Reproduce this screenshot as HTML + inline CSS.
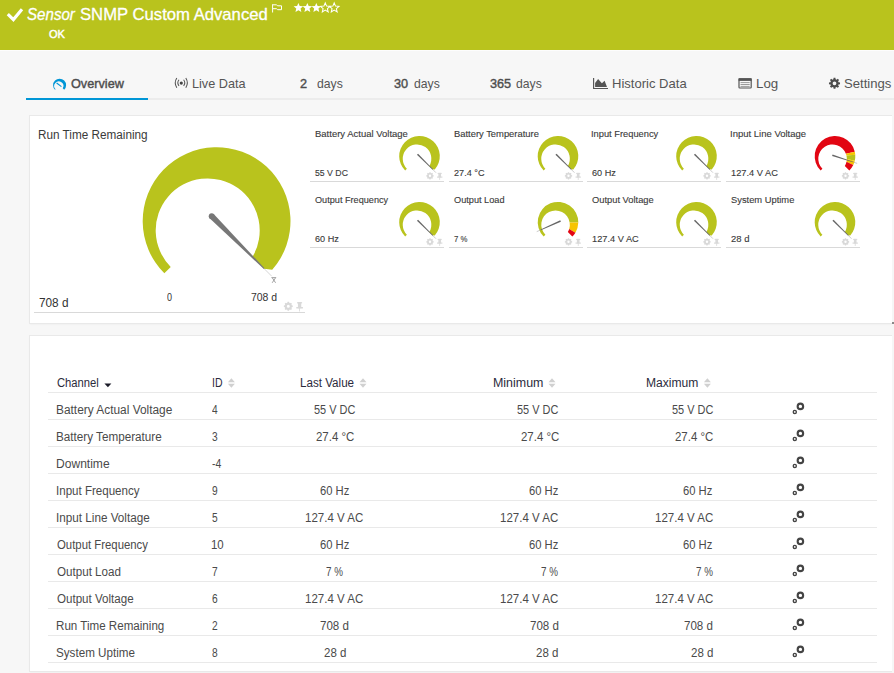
<!DOCTYPE html><html><head><meta charset="utf-8"><style>*{margin:0;padding:0;box-sizing:border-box}html,body{width:894px;height:673px;overflow:hidden;background:#f7f7f7;font-family:"Liberation Sans",sans-serif}.t{position:absolute;white-space:nowrap;line-height:1;transform-origin:0 0}.a{position:absolute}</style></head><body><div class="a" style="left:0;top:0;width:894px;height:50px;background:#b9c31d"></div><div class="a" style="left:0;top:50px;width:894px;height:1px;background:#fdfdfd"></div><div class="a" style="left:26px;top:98px;width:868px;height:2px;background:#ececec"></div><div class="a" style="left:26px;top:98px;width:122px;height:2px;background:#0096d6"></div><div class="a" style="left:30px;top:116px;width:862px;height:207px;background:#fff;box-shadow:0 0 0 1px #e9e9e9,0 1px 2px rgba(0,0,0,0.07)"></div><div class="a" style="left:34px;top:312px;width:271px;height:1px;background:#d9d9d9"></div><div class="a" style="left:310.0px;top:181px;width:134px;height:1px;background:#d9d9d9"></div><div class="a" style="left:448.5px;top:181px;width:134px;height:1px;background:#d9d9d9"></div><div class="a" style="left:587.0px;top:181px;width:134px;height:1px;background:#d9d9d9"></div><div class="a" style="left:725.5px;top:181px;width:134px;height:1px;background:#d9d9d9"></div><div class="a" style="left:310.0px;top:247px;width:134px;height:1px;background:#d9d9d9"></div><div class="a" style="left:448.5px;top:247px;width:134px;height:1px;background:#d9d9d9"></div><div class="a" style="left:587.0px;top:247px;width:134px;height:1px;background:#d9d9d9"></div><div class="a" style="left:725.5px;top:247px;width:134px;height:1px;background:#d9d9d9"></div><div class="a" style="left:30px;top:336px;width:862px;height:335px;background:#fff;box-shadow:0 0 0 1px #e9e9e9,0 1px 2px rgba(0,0,0,0.07)"></div><div class="a" style="left:48px;top:392px;width:829px;height:1px;background:#e9e9e9"></div><div class="a" style="left:48px;top:419px;width:829px;height:1px;background:#e9e9e9"></div><div class="a" style="left:48px;top:446px;width:829px;height:1px;background:#e9e9e9"></div><div class="a" style="left:48px;top:473px;width:829px;height:1px;background:#e9e9e9"></div><div class="a" style="left:48px;top:500px;width:829px;height:1px;background:#e9e9e9"></div><div class="a" style="left:48px;top:527px;width:829px;height:1px;background:#e9e9e9"></div><div class="a" style="left:48px;top:554px;width:829px;height:1px;background:#e9e9e9"></div><div class="a" style="left:48px;top:581px;width:829px;height:1px;background:#e9e9e9"></div><div class="a" style="left:48px;top:608px;width:829px;height:1px;background:#e9e9e9"></div><div class="a" style="left:48px;top:635px;width:829px;height:1px;background:#e9e9e9"></div><div class="a" style="left:48px;top:662px;width:829px;height:1px;background:#e9e9e9"></div><div class="t" style="left:27.11px;top:6.00px;font-size:17px;color:#fff;font-weight:normal;font-style:italic;transform:scaleX(0.8889);-webkit-text-stroke:0.3px #fff;">Sensor</div><div class="t" style="left:80.42px;top:6.00px;font-size:17px;color:#fff;font-weight:normal;font-style:normal;transform:scaleX(0.9805);-webkit-text-stroke:0.3px #fff;">SNMP Custom Advanced</div><div class="t" style="left:48.50px;top:29.00px;font-size:11px;color:#fff;font-weight:normal;font-style:normal;transform:scaleX(1.0071);-webkit-text-stroke:0.45px #fff;">OK</div><div class="t" style="left:71.00px;top:78.00px;font-size:12.7px;color:#4d4d4d;font-weight:normal;font-style:normal;-webkit-text-stroke:0.4px #4d4d4d;">Overview</div><div class="t" style="left:192.00px;top:78.00px;font-size:12.7px;color:#555;font-weight:normal;font-style:normal;">Live Data</div><div class="t" style="left:300.00px;top:78.00px;font-size:12.7px;color:#4d4d4d;font-weight:normal;font-style:normal;-webkit-text-stroke:0.4px #4d4d4d;">2</div><div class="t" style="left:317.00px;top:78.00px;font-size:12.7px;color:#555;font-weight:normal;font-style:normal;transform:scaleX(0.9630);">days</div><div class="t" style="left:394.00px;top:78.00px;font-size:12.7px;color:#4d4d4d;font-weight:normal;font-style:normal;-webkit-text-stroke:0.4px #4d4d4d;">30</div><div class="t" style="left:414.00px;top:78.00px;font-size:12.7px;color:#555;font-weight:normal;font-style:normal;transform:scaleX(0.9630);">days</div><div class="t" style="left:490.00px;top:78.00px;font-size:12.7px;color:#4d4d4d;font-weight:normal;font-style:normal;-webkit-text-stroke:0.4px #4d4d4d;">365</div><div class="t" style="left:515.50px;top:78.00px;font-size:12.7px;color:#555;font-weight:normal;font-style:normal;transform:scaleX(0.9630);">days</div><div class="t" style="left:611.97px;top:78.00px;font-size:12.7px;color:#555;font-weight:normal;font-style:normal;transform:scaleX(1.0278);">Historic Data</div><div class="t" style="left:755.95px;top:78.00px;font-size:12.7px;color:#555;font-weight:normal;font-style:normal;transform:scaleX(1.0500);">Log</div><div class="t" style="left:843.97px;top:78.00px;font-size:12.7px;color:#555;font-weight:normal;font-style:normal;transform:scaleX(1.0333);">Settings</div><div class="t" style="left:37.76px;top:129.40px;font-size:12.5px;color:#3a3a3a;font-weight:normal;font-style:normal;transform:scaleX(0.9391);">Run Time Remaining</div><div class="t" style="left:39.06px;top:296.80px;font-size:12.2px;color:#333;font-weight:normal;font-style:normal;transform:scaleX(0.9680);">708 d</div><div class="t" style="left:166.60px;top:292.20px;font-size:11px;color:#333;font-weight:normal;font-style:normal;transform:scaleX(0.8167);">0</div><div class="t" style="left:250.70px;top:292.20px;font-size:11px;color:#333;font-weight:normal;font-style:normal;transform:scaleX(0.9481);">708 d</div><div class="t" style="left:315.20px;top:128.80px;font-size:9.6px;color:#3a3a3a;font-weight:normal;font-style:normal;transform:scaleX(0.9894);-webkit-text-stroke:0.12px #3a3a3a;">Battery Actual Voltage</div><div class="t" style="left:315.20px;top:167.50px;font-size:9.6px;color:#3a3a3a;font-weight:normal;font-style:normal;transform:scaleX(0.9083);-webkit-text-stroke:0.12px #3a3a3a;">55 V DC</div><div class="t" style="left:453.70px;top:128.80px;font-size:9.6px;color:#3a3a3a;font-weight:normal;font-style:normal;transform:scaleX(0.9782);-webkit-text-stroke:0.12px #3a3a3a;">Battery Temperature</div><div class="t" style="left:453.70px;top:167.50px;font-size:9.6px;color:#3a3a3a;font-weight:normal;font-style:normal;transform:scaleX(0.9500);-webkit-text-stroke:0.12px #3a3a3a;">27.4 °C</div><div class="t" style="left:591.23px;top:128.80px;font-size:9.6px;color:#3a3a3a;font-weight:normal;font-style:normal;transform:scaleX(0.9696);-webkit-text-stroke:0.12px #3a3a3a;">Input Frequency</div><div class="t" style="left:592.20px;top:167.50px;font-size:9.6px;color:#3a3a3a;font-weight:normal;font-style:normal;transform:scaleX(0.9520);-webkit-text-stroke:0.12px #3a3a3a;">60 Hz</div><div class="t" style="left:729.71px;top:128.80px;font-size:9.6px;color:#3a3a3a;font-weight:normal;font-style:normal;transform:scaleX(0.9908);-webkit-text-stroke:0.12px #3a3a3a;">Input Line Voltage</div><div class="t" style="left:730.70px;top:167.50px;font-size:9.6px;color:#3a3a3a;font-weight:normal;font-style:normal;transform:scaleX(0.9667);-webkit-text-stroke:0.12px #3a3a3a;">127.4 V AC</div><div class="t" style="left:315.20px;top:194.80px;font-size:9.6px;color:#3a3a3a;font-weight:normal;font-style:normal;transform:scaleX(0.9519);-webkit-text-stroke:0.12px #3a3a3a;">Output Frequency</div><div class="t" style="left:315.20px;top:233.50px;font-size:9.6px;color:#3a3a3a;font-weight:normal;font-style:normal;transform:scaleX(0.9480);-webkit-text-stroke:0.12px #3a3a3a;">60 Hz</div><div class="t" style="left:453.70px;top:194.80px;font-size:9.6px;color:#3a3a3a;font-weight:normal;font-style:normal;transform:scaleX(0.9566);-webkit-text-stroke:0.12px #3a3a3a;">Output Load</div><div class="t" style="left:453.70px;top:233.50px;font-size:9.6px;color:#3a3a3a;font-weight:normal;font-style:normal;transform:scaleX(0.8118);-webkit-text-stroke:0.12px #3a3a3a;">7 %</div><div class="t" style="left:592.20px;top:194.80px;font-size:9.6px;color:#3a3a3a;font-weight:normal;font-style:normal;transform:scaleX(0.9719);-webkit-text-stroke:0.12px #3a3a3a;">Output Voltage</div><div class="t" style="left:592.20px;top:233.50px;font-size:9.6px;color:#3a3a3a;font-weight:normal;font-style:normal;transform:scaleX(0.9625);-webkit-text-stroke:0.12px #3a3a3a;">127.4 V AC</div><div class="t" style="left:730.70px;top:194.80px;font-size:9.6px;color:#3a3a3a;font-weight:normal;font-style:normal;transform:scaleX(0.9738);-webkit-text-stroke:0.12px #3a3a3a;">System Uptime</div><div class="t" style="left:730.70px;top:233.50px;font-size:9.6px;color:#3a3a3a;font-weight:normal;font-style:normal;transform:scaleX(0.9889);-webkit-text-stroke:0.12px #3a3a3a;">28 d</div><div class="t" style="left:57.10px;top:377.10px;font-size:12px;color:#2b2b3c;font-weight:normal;font-style:normal;transform:scaleX(0.9364);">Channel</div><div class="t" style="left:211.63px;top:377.10px;font-size:12px;color:#2b2b3c;font-weight:normal;font-style:normal;transform:scaleX(0.8727);">ID</div><div class="t" style="left:299.73px;top:377.10px;font-size:12px;color:#2b2b3c;font-weight:normal;font-style:normal;transform:scaleX(0.9691);">Last Value</div><div class="t" style="left:493.26px;top:377.10px;font-size:12px;color:#2b2b3c;font-weight:normal;font-style:normal;transform:scaleX(1.0362);">Minimum</div><div class="t" style="left:645.99px;top:377.10px;font-size:12px;color:#2b2b3c;font-weight:normal;font-style:normal;transform:scaleX(1.0078);">Maximum</div><div class="t" style="left:56.35px;top:404.10px;font-size:12.5px;color:#4a4a4a;font-weight:normal;font-style:normal;transform:scaleX(0.9512);">Battery Actual Voltage</div><div class="t" style="left:212.30px;top:404.10px;font-size:12.5px;color:#4a4a4a;font-weight:normal;font-style:normal;transform:scaleX(0.8143);">4</div><div class="t" style="left:314.00px;top:404.10px;font-size:12.5px;color:#4a4a4a;font-weight:normal;font-style:normal;transform:scaleX(0.8745);">55 V DC</div><div class="t" style="left:517.20px;top:404.10px;font-size:12.5px;color:#4a4a4a;font-weight:normal;font-style:normal;transform:scaleX(0.8745);">55 V DC</div><div class="t" style="left:671.80px;top:404.10px;font-size:12.5px;color:#4a4a4a;font-weight:normal;font-style:normal;transform:scaleX(0.8745);">55 V DC</div><div class="t" style="left:56.36px;top:431.10px;font-size:12.5px;color:#4a4a4a;font-weight:normal;font-style:normal;transform:scaleX(0.9357);">Battery Temperature</div><div class="t" style="left:212.30px;top:431.10px;font-size:12.5px;color:#4a4a4a;font-weight:normal;font-style:normal;transform:scaleX(0.8143);">3</div><div class="t" style="left:315.80px;top:431.10px;font-size:12.5px;color:#4a4a4a;font-weight:normal;font-style:normal;transform:scaleX(0.9146);">27.4 °C</div><div class="t" style="left:520.80px;top:431.10px;font-size:12.5px;color:#4a4a4a;font-weight:normal;font-style:normal;transform:scaleX(0.9146);">27.4 °C</div><div class="t" style="left:675.40px;top:431.10px;font-size:12.5px;color:#4a4a4a;font-weight:normal;font-style:normal;transform:scaleX(0.9146);">27.4 °C</div><div class="t" style="left:56.34px;top:458.10px;font-size:12.5px;color:#4a4a4a;font-weight:normal;font-style:normal;transform:scaleX(0.9648);">Downtime</div><div class="t" style="left:212.30px;top:458.10px;font-size:12.5px;color:#4a4a4a;font-weight:normal;font-style:normal;transform:scaleX(0.8364);">-4</div><div class="t" style="left:56.38px;top:485.10px;font-size:12.5px;color:#4a4a4a;font-weight:normal;font-style:normal;transform:scaleX(0.9247);">Input Frequency</div><div class="t" style="left:212.30px;top:485.10px;font-size:12.5px;color:#4a4a4a;font-weight:normal;font-style:normal;transform:scaleX(0.8143);">9</div><div class="t" style="left:319.75px;top:485.10px;font-size:12.5px;color:#4a4a4a;font-weight:normal;font-style:normal;transform:scaleX(0.8970);">60 Hz</div><div class="t" style="left:528.70px;top:485.10px;font-size:12.5px;color:#4a4a4a;font-weight:normal;font-style:normal;transform:scaleX(0.8970);">60 Hz</div><div class="t" style="left:683.30px;top:485.10px;font-size:12.5px;color:#4a4a4a;font-weight:normal;font-style:normal;transform:scaleX(0.8970);">60 Hz</div><div class="t" style="left:56.36px;top:512.10px;font-size:12.5px;color:#4a4a4a;font-weight:normal;font-style:normal;transform:scaleX(0.9364);">Input Line Voltage</div><div class="t" style="left:212.30px;top:512.10px;font-size:12.5px;color:#4a4a4a;font-weight:normal;font-style:normal;transform:scaleX(0.8143);">5</div><div class="t" style="left:305.08px;top:512.10px;font-size:12.5px;color:#4a4a4a;font-weight:normal;font-style:normal;transform:scaleX(0.9210);">127.4 V AC</div><div class="t" style="left:500.28px;top:512.10px;font-size:12.5px;color:#4a4a4a;font-weight:normal;font-style:normal;transform:scaleX(0.9210);">127.4 V AC</div><div class="t" style="left:654.88px;top:512.10px;font-size:12.5px;color:#4a4a4a;font-weight:normal;font-style:normal;transform:scaleX(0.9210);">127.4 V AC</div><div class="t" style="left:57.30px;top:539.10px;font-size:12.5px;color:#4a4a4a;font-weight:normal;font-style:normal;transform:scaleX(0.9090);">Output Frequency</div><div class="t" style="left:211.38px;top:539.10px;font-size:12.5px;color:#4a4a4a;font-weight:normal;font-style:normal;transform:scaleX(0.9154);">10</div><div class="t" style="left:319.75px;top:539.10px;font-size:12.5px;color:#4a4a4a;font-weight:normal;font-style:normal;transform:scaleX(0.8970);">60 Hz</div><div class="t" style="left:528.70px;top:539.10px;font-size:12.5px;color:#4a4a4a;font-weight:normal;font-style:normal;transform:scaleX(0.8970);">60 Hz</div><div class="t" style="left:683.30px;top:539.10px;font-size:12.5px;color:#4a4a4a;font-weight:normal;font-style:normal;transform:scaleX(0.8970);">60 Hz</div><div class="t" style="left:57.30px;top:566.10px;font-size:12.5px;color:#4a4a4a;font-weight:normal;font-style:normal;transform:scaleX(0.9294);">Output Load</div><div class="t" style="left:212.30px;top:566.10px;font-size:12.5px;color:#4a4a4a;font-weight:normal;font-style:normal;transform:scaleX(0.8143);">7</div><div class="t" style="left:325.90px;top:566.10px;font-size:12.5px;color:#4a4a4a;font-weight:normal;font-style:normal;transform:scaleX(0.7864);">7 %</div><div class="t" style="left:541.00px;top:566.10px;font-size:12.5px;color:#4a4a4a;font-weight:normal;font-style:normal;transform:scaleX(0.7864);">7 %</div><div class="t" style="left:695.60px;top:566.10px;font-size:12.5px;color:#4a4a4a;font-weight:normal;font-style:normal;transform:scaleX(0.7864);">7 %</div><div class="t" style="left:57.30px;top:593.10px;font-size:12.5px;color:#4a4a4a;font-weight:normal;font-style:normal;transform:scaleX(0.9265);">Output Voltage</div><div class="t" style="left:212.30px;top:593.10px;font-size:12.5px;color:#4a4a4a;font-weight:normal;font-style:normal;transform:scaleX(0.8143);">6</div><div class="t" style="left:305.08px;top:593.10px;font-size:12.5px;color:#4a4a4a;font-weight:normal;font-style:normal;transform:scaleX(0.9210);">127.4 V AC</div><div class="t" style="left:500.28px;top:593.10px;font-size:12.5px;color:#4a4a4a;font-weight:normal;font-style:normal;transform:scaleX(0.9210);">127.4 V AC</div><div class="t" style="left:654.88px;top:593.10px;font-size:12.5px;color:#4a4a4a;font-weight:normal;font-style:normal;transform:scaleX(0.9210);">127.4 V AC</div><div class="t" style="left:56.37px;top:620.10px;font-size:12.5px;color:#4a4a4a;font-weight:normal;font-style:normal;transform:scaleX(0.9278);">Run Time Remaining</div><div class="t" style="left:212.30px;top:620.10px;font-size:12.5px;color:#4a4a4a;font-weight:normal;font-style:normal;transform:scaleX(0.8143);">2</div><div class="t" style="left:320.20px;top:620.10px;font-size:12.5px;color:#4a4a4a;font-weight:normal;font-style:normal;transform:scaleX(0.9258);">708 d</div><div class="t" style="left:529.60px;top:620.10px;font-size:12.5px;color:#4a4a4a;font-weight:normal;font-style:normal;transform:scaleX(0.9258);">708 d</div><div class="t" style="left:684.20px;top:620.10px;font-size:12.5px;color:#4a4a4a;font-weight:normal;font-style:normal;transform:scaleX(0.9258);">708 d</div><div class="t" style="left:56.37px;top:647.10px;font-size:12.5px;color:#4a4a4a;font-weight:normal;font-style:normal;transform:scaleX(0.9321);">System Uptime</div><div class="t" style="left:212.30px;top:647.10px;font-size:12.5px;color:#4a4a4a;font-weight:normal;font-style:normal;transform:scaleX(0.8143);">8</div><div class="t" style="left:323.50px;top:647.10px;font-size:12.5px;color:#4a4a4a;font-weight:normal;font-style:normal;transform:scaleX(0.9208);">28 d</div><div class="t" style="left:536.20px;top:647.10px;font-size:12.5px;color:#4a4a4a;font-weight:normal;font-style:normal;transform:scaleX(0.9208);">28 d</div><div class="t" style="left:690.80px;top:647.10px;font-size:12.5px;color:#4a4a4a;font-weight:normal;font-style:normal;transform:scaleX(0.9208);">28 d</div><svg class="a" style="left:0;top:0" width="894" height="673" viewBox="0 0 894 673"><path d="M7.8 14.2L13.4 19.6L22 9.2" stroke="#fff" stroke-width="3.1" fill="none"/><path d="M272.6 4.2V12.5M273 4.8h3.6l0.9 1h4v3.9h-4l-0.9-1H273" stroke="#fff" stroke-width="1" fill="none"/><polygon points="298.40,2.90 299.72,6.08 303.16,6.35 300.54,8.60 301.34,11.95 298.40,10.15 295.46,11.95 296.26,8.60 293.64,6.35 297.08,6.08" fill="#fff"/><polygon points="307.35,2.90 308.67,6.08 312.11,6.35 309.49,8.60 310.29,11.95 307.35,10.15 304.41,11.95 305.21,8.60 302.59,6.35 306.03,6.08" fill="#fff"/><polygon points="316.30,2.90 317.62,6.08 321.06,6.35 318.44,8.60 319.24,11.95 316.30,10.15 313.36,11.95 314.16,8.60 311.54,6.35 314.98,6.08" fill="#fff"/><polygon points="325.25,2.90 326.57,6.08 330.01,6.35 327.39,8.60 328.19,11.95 325.25,10.15 322.31,11.95 323.11,8.60 320.49,6.35 323.93,6.08" fill="none" stroke="#fff" stroke-width="1.05"/><polygon points="334.20,2.90 335.52,6.08 338.96,6.35 336.34,8.60 337.14,11.95 334.20,10.15 331.26,11.95 332.06,8.60 329.44,6.35 332.88,6.08" fill="none" stroke="#fff" stroke-width="1.05"/><path fill="#0096d6" d="M55.00 89.80A6.50 6.50 0 1 1 64.20 89.80L62.75 88.35A4.57 4.57 0 1 0 55.57 89.23Z"/><path fill="#0096d6" d="M56.28 83.45L61.11 87.02L61.77 86.14L57.01 82.49Z"/><circle cx="181.3" cy="83.1" r="1.6" fill="#444"/><path d="M179 79.8Q176.6 82.85 179 85.9M183.6 79.8Q186 82.85 183.6 85.9M176.8 78Q173.7 82.85 176.8 87.7M185.8 78Q188.9 82.85 185.8 87.7" stroke="#555" stroke-width="1.05" fill="none"/><path d="M593.6 78V88.5H608" stroke="#555" stroke-width="1.15" fill="none"/><path d="M595.1 87V83L598.1 78.9L601.9 83.2L604.6 80.7L607 87Z" fill="#555"/><rect x="739" y="78.8" width="12.2" height="9.2" rx="0.8" fill="none" stroke="#555" stroke-width="1.2"/><rect x="738.6" y="78.3" width="13" height="2.6" fill="#555"/><path d="M740.5 82.6h9.2M740.5 84.5h9.2M740.5 86.4h9.2" stroke="#9a9a9a" stroke-width="1"/><path fill="#4d4d4d" fill-rule="evenodd" d="M838.48 82.14L840.03 82.42L840.03 84.18L838.48 84.46L838.13 85.30L839.03 86.59L837.79 87.83L836.50 86.93L835.66 87.28L835.38 88.83L833.62 88.83L833.34 87.28L832.50 86.93L831.21 87.83L829.97 86.59L830.87 85.30L830.52 84.46L828.97 84.18L828.97 82.42L830.52 82.14L830.87 81.30L829.97 80.01L831.21 78.77L832.50 79.67L833.34 79.32L833.62 77.77L835.38 77.77L835.66 79.32L836.50 79.67L837.79 78.77L839.03 80.01L838.13 81.30ZM836.40 83.30A1.90 1.90 0 1 0 832.60 83.30A1.90 1.90 0 1 0 836.40 83.30Z"/><path fill="#b9c31d" d="M164.34 273.36A73.90 73.90 0 1 1 272.20 269.78L264.15 268.65L252.43 256.93A52.00 52.00 0 1 0 170.73 266.97Z"/><path fill="#777" d="M209.60 218.20L263.80 269.01L264.51 268.30L213.70 214.10Z"/><circle cx="211.65" cy="216.15" r="2.90" fill="#777"/><line x1="264.15" y1="268.65" x2="271.68" y2="276.18" stroke="#aaa" stroke-width="0.5"/><path d="M271.4 277.6h4.8M272.4 278L275.6 282.8M275.4 278L272.2 282.8" stroke="#8a8a8a" stroke-width="0.8" fill="none"/><path fill="#d9d9d9" fill-rule="evenodd" d="M291.76 305.30L292.74 305.60L292.74 307.00L291.76 307.30L291.45 308.03L291.94 308.95L290.95 309.94L290.03 309.45L289.30 309.76L289.00 310.74L287.60 310.74L287.30 309.76L286.57 309.45L285.65 309.94L284.66 308.95L285.15 308.03L284.84 307.30L283.86 307.00L283.86 305.60L284.84 305.30L285.15 304.57L284.66 303.65L285.65 302.66L286.57 303.15L287.30 302.84L287.60 301.86L289.00 301.86L289.30 302.84L290.03 303.15L290.95 302.66L291.94 303.65L291.45 304.57ZM289.80 306.30A1.50 1.50 0 1 0 286.80 306.30A1.50 1.50 0 1 0 289.80 306.30Z"/><rect x="297.09" y="302.10" width="5.02" height="1.32" fill="#d9d9d9"/><rect x="297.95" y="302.10" width="3.30" height="6.11" fill="#d9d9d9"/><rect x="296.30" y="306.99" width="6.60" height="1.50" fill="#d9d9d9"/><rect x="299.20" y="307.74" width="0.8" height="3.76" fill="#d9d9d9"/><path fill="#b9c31d" d="M405.15 170.55A20.30 20.30 0 1 1 434.77 169.57L432.56 169.26L429.34 166.04A14.29 14.29 0 1 0 406.90 168.80Z"/><path fill="#666" d="M416.95 154.79L432.60 169.80L433.10 169.30L418.09 153.65Z"/><line x1="432.85" y1="169.55" x2="435.98" y2="172.68" stroke="#999" stroke-width="0.5"/><path fill="#d9d9d9" fill-rule="evenodd" d="M432.84 174.97L433.65 175.22L433.65 176.38L432.84 176.63L432.59 177.23L432.99 177.97L432.17 178.79L431.43 178.39L430.83 178.64L430.58 179.45L429.42 179.45L429.17 178.64L428.57 178.39L427.83 178.79L427.01 177.97L427.41 177.23L427.16 176.63L426.35 176.38L426.35 175.22L427.16 174.97L427.41 174.37L427.01 173.63L427.83 172.81L428.57 173.21L429.17 172.96L429.42 172.15L430.58 172.15L430.83 172.96L431.43 173.21L432.17 172.81L432.99 173.63L432.59 174.37ZM431.20 175.80A1.20 1.20 0 1 0 428.80 175.80A1.20 1.20 0 1 0 431.20 175.80Z"/><rect x="437.65" y="172.90" width="4.10" height="0.98" fill="#d9d9d9"/><rect x="438.35" y="172.90" width="2.70" height="4.55" fill="#d9d9d9"/><rect x="437.00" y="176.54" width="5.40" height="1.12" fill="#d9d9d9"/><rect x="439.30" y="177.10" width="0.8" height="2.80" fill="#d9d9d9"/><path fill="#b9c31d" d="M543.65 170.55A20.30 20.30 0 1 1 573.27 169.57L571.06 169.26L567.84 166.04A14.29 14.29 0 1 0 545.40 168.80Z"/><path fill="#666" d="M555.45 154.79L571.10 169.80L571.60 169.30L556.59 153.65Z"/><line x1="571.35" y1="169.55" x2="574.48" y2="172.68" stroke="#999" stroke-width="0.5"/><path fill="#d9d9d9" fill-rule="evenodd" d="M571.34 174.97L572.15 175.22L572.15 176.38L571.34 176.63L571.09 177.23L571.49 177.97L570.67 178.79L569.93 178.39L569.33 178.64L569.08 179.45L567.92 179.45L567.67 178.64L567.07 178.39L566.33 178.79L565.51 177.97L565.91 177.23L565.66 176.63L564.85 176.38L564.85 175.22L565.66 174.97L565.91 174.37L565.51 173.63L566.33 172.81L567.07 173.21L567.67 172.96L567.92 172.15L569.08 172.15L569.33 172.96L569.93 173.21L570.67 172.81L571.49 173.63L571.09 174.37ZM569.70 175.80A1.20 1.20 0 1 0 567.30 175.80A1.20 1.20 0 1 0 569.70 175.80Z"/><rect x="576.15" y="172.90" width="4.10" height="0.98" fill="#d9d9d9"/><rect x="576.85" y="172.90" width="2.70" height="4.55" fill="#d9d9d9"/><rect x="575.50" y="176.54" width="5.40" height="1.12" fill="#d9d9d9"/><rect x="577.80" y="177.10" width="0.8" height="2.80" fill="#d9d9d9"/><path fill="#b9c31d" d="M682.15 170.55A20.30 20.30 0 1 1 711.77 169.57L709.56 169.26L706.34 166.04A14.29 14.29 0 1 0 683.90 168.80Z"/><path fill="#666" d="M693.95 154.79L709.60 169.80L710.10 169.30L695.09 153.65Z"/><line x1="709.85" y1="169.55" x2="712.98" y2="172.68" stroke="#999" stroke-width="0.5"/><path fill="#d9d9d9" fill-rule="evenodd" d="M709.84 174.97L710.65 175.22L710.65 176.38L709.84 176.63L709.59 177.23L709.99 177.97L709.17 178.79L708.43 178.39L707.83 178.64L707.58 179.45L706.42 179.45L706.17 178.64L705.57 178.39L704.83 178.79L704.01 177.97L704.41 177.23L704.16 176.63L703.35 176.38L703.35 175.22L704.16 174.97L704.41 174.37L704.01 173.63L704.83 172.81L705.57 173.21L706.17 172.96L706.42 172.15L707.58 172.15L707.83 172.96L708.43 173.21L709.17 172.81L709.99 173.63L709.59 174.37ZM708.20 175.80A1.20 1.20 0 1 0 705.80 175.80A1.20 1.20 0 1 0 708.20 175.80Z"/><rect x="714.65" y="172.90" width="4.10" height="0.98" fill="#d9d9d9"/><rect x="715.35" y="172.90" width="2.70" height="4.55" fill="#d9d9d9"/><rect x="714.00" y="176.54" width="5.40" height="1.12" fill="#d9d9d9"/><rect x="716.30" y="177.10" width="0.8" height="2.80" fill="#d9d9d9"/><path fill="#e20613" d="M820.65 170.55A20.30 20.30 0 1 1 854.78 151.63L845.91 153.68A14.29 14.29 0 1 0 822.40 168.80Z"/><path fill="#f7c400" d="M854.78 151.63A20.30 20.30 0 0 1 855.25 154.78L846.44 155.40A14.29 14.29 0 0 0 845.91 153.68Z"/><path fill="#b9c31d" d="M855.25 154.78A20.30 20.30 0 0 1 854.78 160.77L846.84 158.93A14.29 14.29 0 0 0 846.44 155.40Z"/><path fill="#f7c400" d="M854.78 160.77A20.30 20.30 0 0 1 853.25 165.10L846.51 161.81A14.29 14.29 0 0 0 846.84 158.93Z"/><path fill="#e20613" d="M853.25 165.10A20.30 20.30 0 0 1 849.35 170.55L844.84 166.04A14.29 14.29 0 0 0 846.51 161.81Z"/><path fill="#666" d="M832.09 156.10L852.85 162.37L853.06 161.70L832.58 154.57Z"/><line x1="852.95" y1="162.03" x2="857.16" y2="163.40" stroke="#999" stroke-width="0.5"/><path fill="#d9d9d9" fill-rule="evenodd" d="M848.34 174.97L849.15 175.22L849.15 176.38L848.34 176.63L848.09 177.23L848.49 177.97L847.67 178.79L846.93 178.39L846.33 178.64L846.08 179.45L844.92 179.45L844.67 178.64L844.07 178.39L843.33 178.79L842.51 177.97L842.91 177.23L842.66 176.63L841.85 176.38L841.85 175.22L842.66 174.97L842.91 174.37L842.51 173.63L843.33 172.81L844.07 173.21L844.67 172.96L844.92 172.15L846.08 172.15L846.33 172.96L846.93 173.21L847.67 172.81L848.49 173.63L848.09 174.37ZM846.70 175.80A1.20 1.20 0 1 0 844.30 175.80A1.20 1.20 0 1 0 846.70 175.80Z"/><rect x="853.15" y="172.90" width="4.10" height="0.98" fill="#d9d9d9"/><rect x="853.85" y="172.90" width="2.70" height="4.55" fill="#d9d9d9"/><rect x="852.50" y="176.54" width="5.40" height="1.12" fill="#d9d9d9"/><rect x="854.80" y="177.10" width="0.8" height="2.80" fill="#d9d9d9"/><path fill="#b9c31d" d="M405.15 236.55A20.30 20.30 0 1 1 434.77 235.57L432.56 235.26L429.34 232.04A14.29 14.29 0 1 0 406.90 234.80Z"/><path fill="#666" d="M416.95 220.79L432.60 235.80L433.10 235.30L418.09 219.65Z"/><line x1="432.85" y1="235.55" x2="435.98" y2="238.68" stroke="#999" stroke-width="0.5"/><path fill="#d9d9d9" fill-rule="evenodd" d="M432.84 240.97L433.65 241.22L433.65 242.38L432.84 242.63L432.59 243.23L432.99 243.97L432.17 244.79L431.43 244.39L430.83 244.64L430.58 245.45L429.42 245.45L429.17 244.64L428.57 244.39L427.83 244.79L427.01 243.97L427.41 243.23L427.16 242.63L426.35 242.38L426.35 241.22L427.16 240.97L427.41 240.37L427.01 239.63L427.83 238.81L428.57 239.21L429.17 238.96L429.42 238.15L430.58 238.15L430.83 238.96L431.43 239.21L432.17 238.81L432.99 239.63L432.59 240.37ZM431.20 241.80A1.20 1.20 0 1 0 428.80 241.80A1.20 1.20 0 1 0 431.20 241.80Z"/><rect x="437.65" y="238.90" width="4.10" height="0.98" fill="#d9d9d9"/><rect x="438.35" y="238.90" width="2.70" height="4.55" fill="#d9d9d9"/><rect x="437.00" y="242.54" width="5.40" height="1.12" fill="#d9d9d9"/><rect x="439.30" y="243.10" width="0.8" height="2.80" fill="#d9d9d9"/><path fill="#b9c31d" d="M543.65 236.55A20.30 20.30 0 1 1 578.30 222.55L569.65 222.40A14.29 14.29 0 1 0 545.40 234.80Z"/><path fill="#f7c400" d="M578.30 222.55A20.30 20.30 0 0 1 575.40 232.66L569.21 228.94A14.29 14.29 0 0 0 569.65 222.40Z"/><path fill="#e20613" d="M575.40 232.66A20.30 20.30 0 0 1 572.35 236.55L567.84 232.04A14.29 14.29 0 0 0 569.21 228.94Z"/><path fill="#666" d="M560.23 220.33L540.61 229.56L540.90 230.20L560.88 221.79Z"/><line x1="540.75" y1="229.88" x2="536.71" y2="231.68" stroke="#999" stroke-width="0.5"/><path fill="#d9d9d9" fill-rule="evenodd" d="M571.34 240.97L572.15 241.22L572.15 242.38L571.34 242.63L571.09 243.23L571.49 243.97L570.67 244.79L569.93 244.39L569.33 244.64L569.08 245.45L567.92 245.45L567.67 244.64L567.07 244.39L566.33 244.79L565.51 243.97L565.91 243.23L565.66 242.63L564.85 242.38L564.85 241.22L565.66 240.97L565.91 240.37L565.51 239.63L566.33 238.81L567.07 239.21L567.67 238.96L567.92 238.15L569.08 238.15L569.33 238.96L569.93 239.21L570.67 238.81L571.49 239.63L571.09 240.37ZM569.70 241.80A1.20 1.20 0 1 0 567.30 241.80A1.20 1.20 0 1 0 569.70 241.80Z"/><rect x="576.15" y="238.90" width="4.10" height="0.98" fill="#d9d9d9"/><rect x="576.85" y="238.90" width="2.70" height="4.55" fill="#d9d9d9"/><rect x="575.50" y="242.54" width="5.40" height="1.12" fill="#d9d9d9"/><rect x="577.80" y="243.10" width="0.8" height="2.80" fill="#d9d9d9"/><path fill="#b9c31d" d="M682.15 236.55A20.30 20.30 0 1 1 711.77 235.57L709.56 235.26L706.34 232.04A14.29 14.29 0 1 0 683.90 234.80Z"/><path fill="#666" d="M693.95 220.79L709.60 235.80L710.10 235.30L695.09 219.65Z"/><line x1="709.85" y1="235.55" x2="712.98" y2="238.68" stroke="#999" stroke-width="0.5"/><path fill="#d9d9d9" fill-rule="evenodd" d="M709.84 240.97L710.65 241.22L710.65 242.38L709.84 242.63L709.59 243.23L709.99 243.97L709.17 244.79L708.43 244.39L707.83 244.64L707.58 245.45L706.42 245.45L706.17 244.64L705.57 244.39L704.83 244.79L704.01 243.97L704.41 243.23L704.16 242.63L703.35 242.38L703.35 241.22L704.16 240.97L704.41 240.37L704.01 239.63L704.83 238.81L705.57 239.21L706.17 238.96L706.42 238.15L707.58 238.15L707.83 238.96L708.43 239.21L709.17 238.81L709.99 239.63L709.59 240.37ZM708.20 241.80A1.20 1.20 0 1 0 705.80 241.80A1.20 1.20 0 1 0 708.20 241.80Z"/><rect x="714.65" y="238.90" width="4.10" height="0.98" fill="#d9d9d9"/><rect x="715.35" y="238.90" width="2.70" height="4.55" fill="#d9d9d9"/><rect x="714.00" y="242.54" width="5.40" height="1.12" fill="#d9d9d9"/><rect x="716.30" y="243.10" width="0.8" height="2.80" fill="#d9d9d9"/><path fill="#b9c31d" d="M820.65 236.55A20.30 20.30 0 1 1 850.27 235.57L848.06 235.26L844.84 232.04A14.29 14.29 0 1 0 822.40 234.80Z"/><path fill="#666" d="M832.45 220.79L848.10 235.80L848.60 235.30L833.59 219.65Z"/><line x1="848.35" y1="235.55" x2="851.48" y2="238.68" stroke="#999" stroke-width="0.5"/><path fill="#d9d9d9" fill-rule="evenodd" d="M848.34 240.97L849.15 241.22L849.15 242.38L848.34 242.63L848.09 243.23L848.49 243.97L847.67 244.79L846.93 244.39L846.33 244.64L846.08 245.45L844.92 245.45L844.67 244.64L844.07 244.39L843.33 244.79L842.51 243.97L842.91 243.23L842.66 242.63L841.85 242.38L841.85 241.22L842.66 240.97L842.91 240.37L842.51 239.63L843.33 238.81L844.07 239.21L844.67 238.96L844.92 238.15L846.08 238.15L846.33 238.96L846.93 239.21L847.67 238.81L848.49 239.63L848.09 240.37ZM846.70 241.80A1.20 1.20 0 1 0 844.30 241.80A1.20 1.20 0 1 0 846.70 241.80Z"/><rect x="853.15" y="238.90" width="4.10" height="0.98" fill="#d9d9d9"/><rect x="853.85" y="238.90" width="2.70" height="4.55" fill="#d9d9d9"/><rect x="852.50" y="242.54" width="5.40" height="1.12" fill="#d9d9d9"/><rect x="854.80" y="243.10" width="0.8" height="2.80" fill="#d9d9d9"/><path d="M104.4 383.5H111.4L107.9 387.3Z" fill="#1b1b28"/><path d="M227.9 382.3L231.4 378.3L234.9 382.3Z M227.9 383.7L231.4 387.7L234.9 383.7Z" fill="#d0d0d0"/><path d="M359.5 382.3L363.0 378.3L366.5 382.3Z M359.5 383.7L363.0 387.7L366.5 383.7Z" fill="#d0d0d0"/><path d="M548.5 382.3L552.0 378.3L555.5 382.3Z M548.5 383.7L552.0 387.7L555.5 383.7Z" fill="#d0d0d0"/><path d="M703.9 382.3L707.4 378.3L710.9 382.3Z M703.9 383.7L707.4 387.7L710.9 383.7Z" fill="#d0d0d0"/><circle cx="800.4" cy="406.40" r="2.75" fill="none" stroke="#444" stroke-width="2.1"/><circle cx="794.8" cy="411.90" r="1.55" fill="none" stroke="#444" stroke-width="1.4"/><circle cx="800.4" cy="433.40" r="2.75" fill="none" stroke="#444" stroke-width="2.1"/><circle cx="794.8" cy="438.90" r="1.55" fill="none" stroke="#444" stroke-width="1.4"/><circle cx="800.4" cy="460.40" r="2.75" fill="none" stroke="#444" stroke-width="2.1"/><circle cx="794.8" cy="465.90" r="1.55" fill="none" stroke="#444" stroke-width="1.4"/><circle cx="800.4" cy="487.40" r="2.75" fill="none" stroke="#444" stroke-width="2.1"/><circle cx="794.8" cy="492.90" r="1.55" fill="none" stroke="#444" stroke-width="1.4"/><circle cx="800.4" cy="514.40" r="2.75" fill="none" stroke="#444" stroke-width="2.1"/><circle cx="794.8" cy="519.90" r="1.55" fill="none" stroke="#444" stroke-width="1.4"/><circle cx="800.4" cy="541.40" r="2.75" fill="none" stroke="#444" stroke-width="2.1"/><circle cx="794.8" cy="546.90" r="1.55" fill="none" stroke="#444" stroke-width="1.4"/><circle cx="800.4" cy="568.40" r="2.75" fill="none" stroke="#444" stroke-width="2.1"/><circle cx="794.8" cy="573.90" r="1.55" fill="none" stroke="#444" stroke-width="1.4"/><circle cx="800.4" cy="595.40" r="2.75" fill="none" stroke="#444" stroke-width="2.1"/><circle cx="794.8" cy="600.90" r="1.55" fill="none" stroke="#444" stroke-width="1.4"/><circle cx="800.4" cy="622.40" r="2.75" fill="none" stroke="#444" stroke-width="2.1"/><circle cx="794.8" cy="627.90" r="1.55" fill="none" stroke="#444" stroke-width="1.4"/><circle cx="800.4" cy="649.40" r="2.75" fill="none" stroke="#444" stroke-width="2.1"/><circle cx="794.8" cy="654.90" r="1.55" fill="none" stroke="#444" stroke-width="1.4"/></svg><div class="a" style="left:892px;top:100px;width:2px;height:573px;background:#f6f6f6"></div><div class="a" style="left:892px;top:322px;width:2px;height:2px;background:#888"></div></body></html>
